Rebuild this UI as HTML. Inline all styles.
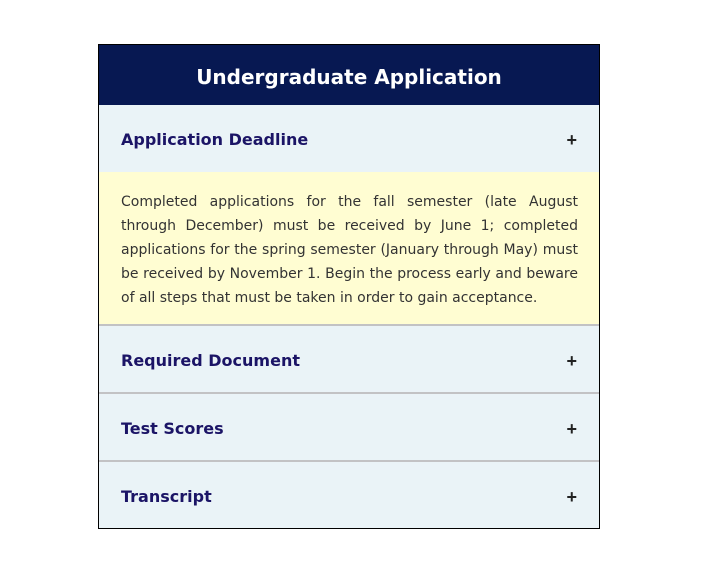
<!DOCTYPE html>
<html><head><style>
body{margin:0;background:#fff;font-family:"DejaVu Sans","Liberation Sans",sans-serif;}
.box{position:absolute;left:98px;top:44px;width:500px;border:1px solid #000;}
.hd{background:#071852;color:#fff;height:60px;line-height:64px;text-align:center;font-weight:bold;font-size:20px;}
.row{background:#eaf3f7;height:66px;position:relative;border-top:2px solid #c2c2c4;}
.row.first{border-top:0;height:67px}
.row span{position:absolute;left:22px;top:0;line-height:70px;font-weight:bold;font-size:16px;color:#1b1466;}
.row b{position:absolute;right:22px;top:0;line-height:70px;font-size:18px;color:#222;font-family:"Liberation Sans",sans-serif;}
.body{background:#fffdd2;padding:18px 21px 15px 22px;font-size:14px;line-height:24px;color:#333;text-align:justify;height:119px;}
</style></head><body>
<div class="box">
<div class="hd">Undergraduate Application</div>
<div class="row first"><span>Application Deadline</span><b>+</b></div>
<div class="body">Completed applications for the fall semester (late August through December) must be received by June 1; completed applications for the spring semester (January through May) must be received by November 1. Begin the process early and beware of all steps that must be taken in order to gain acceptance.</div>
<div class="row"><span>Required Document</span><b>+</b></div>
<div class="row"><span>Test Scores</span><b>+</b></div>
<div class="row"><span>Transcript</span><b>+</b></div>
</div>
</body></html>
